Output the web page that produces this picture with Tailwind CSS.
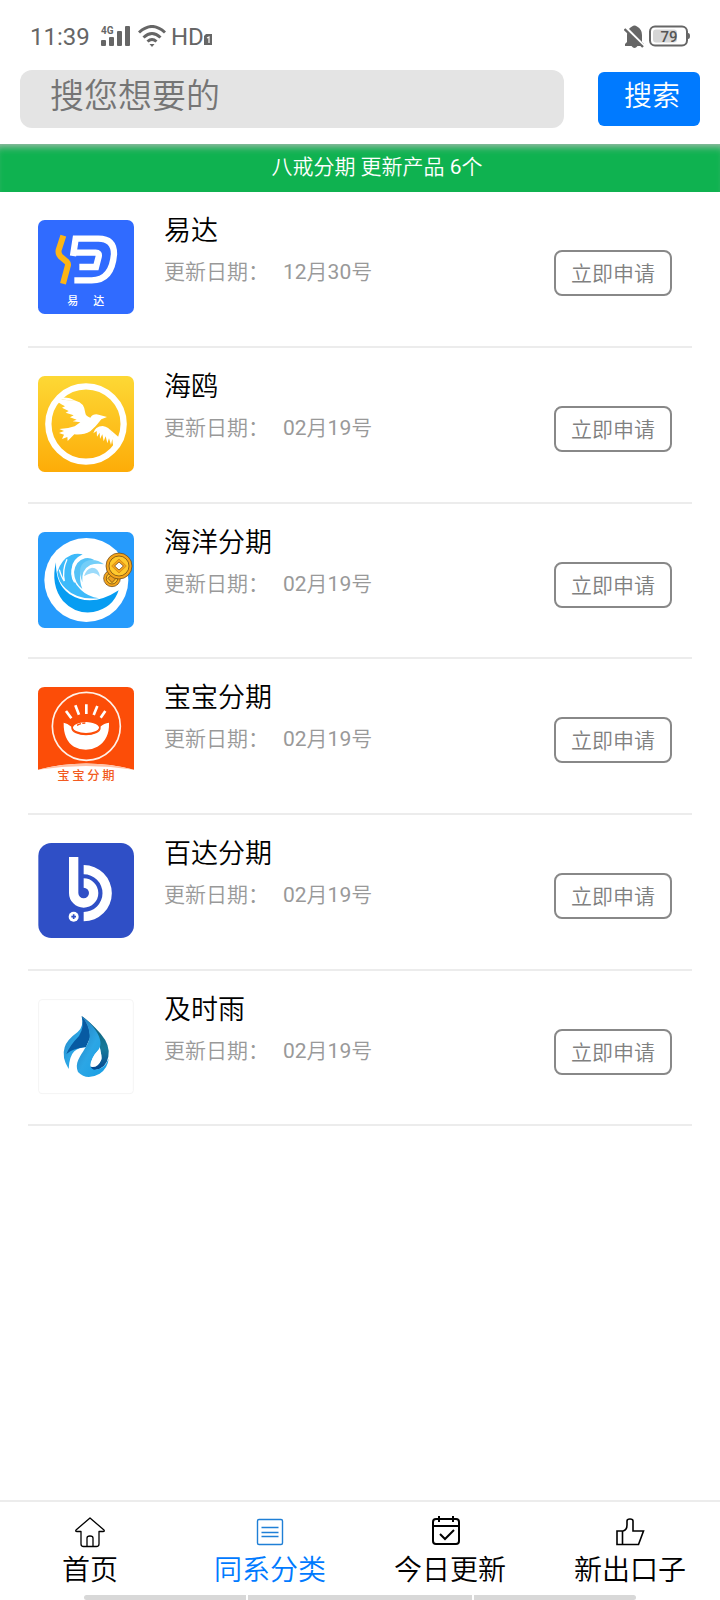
<!DOCTYPE html>
<html lang="zh-CN">
<head>
<meta charset="utf-8">
<meta name="viewport" content="width=device-width, initial-scale=1">
<title>八戒分期</title>
<script src="https://cdn.jsdelivr.net/npm/@tailwindcss/browser@4"></script>
</head>
<body class="flex min-h-screen flex-col bg-white font-[Roboto,'Noto_Sans_CJK_SC',sans-serif] font-[350] text-black">

<header>
  <div class="flex h-[70px] items-center justify-between px-[30px] pt-1 text-[#666]">
    <div class="flex items-center">
      <span class="w-[62px] text-[24px] font-normal">11:39</span>
      <svg class="ml-2 h-6 w-[30px]" viewBox="0 0 30 24" fill="currentColor" aria-hidden="true">
        <rect x="1" y="15" width="5" height="6" rx="1"/><rect x="9" y="12" width="5" height="9" rx="1"/><rect x="17" y="6" width="5" height="15" rx="1"/><rect x="25" y="1" width="5" height="20" rx="1"/>
        <text x="1" y="9" font-size="10" font-weight="700" font-family="Roboto">4G</text>
      </svg>
      <svg class="ml-2 h-6 w-[28px]" viewBox="0 0 28 24" fill="none" stroke="currentColor" stroke-width="3" aria-hidden="true">
        <path d="M1 7.500Q14-4.500 27 7.500M5.500 12.500Q14 4.500 22.500 12.500M9.500 16.500Q14 12.500 18.500 16.500"/><path d="M11.500 19h5L14 22z" fill="currentColor" stroke="none"/>
      </svg>
      <span class="ml-[5px] text-[24px] font-normal">HD</span>
      <svg class="mt-1 h-[11px] w-2" viewBox="0 0 8 11" aria-hidden="true"><path d="M2 0h6v11H0V2z" fill="currentColor"/><path d="M3 4l2-1v6" fill="none" stroke="#fff" stroke-width="1.200"/></svg>
    </div>
    <div class="flex items-center">
      <svg class="h-6 w-5" viewBox="0 0 20 24" aria-hidden="true">
        <path d="M1 19l2-2v-7q0-6 5-8.500q2.500-2 5 0q5 2.500 5 8.500v7l2 2v2h-6.500q-3 4-6 0H1z" fill="currentColor"/>
        <path d="M1 2l19 19" stroke="#fff" stroke-width="3"/><path d="M.5 4l18.500 18" stroke="currentColor" stroke-width="2.400"/>
      </svg>
      <svg class="h-6 w-[46px]" viewBox="0 0 46 24" aria-label="电量 79" role="img">
        <rect x="6" y="1.500" width="37" height="19" rx="5" fill="none" stroke="currentColor" stroke-width="2"/>
        <rect x="9" y="4.500" width="24" height="13" rx="3" fill="#d6d6d6"/><path d="M43 8h1q2 0 2 3t-2 3h-1z" fill="currentColor"/>
        <text x="25" y="16.500" text-anchor="middle" font-size="15" font-weight="500" font-family="Roboto" fill="#555">79</text>
      </svg>
    </div>
  </div>
  <form class="flex items-start gap-[34px] px-5 pb-4">
    <input type="search" aria-label="搜索" placeholder="搜您想要的" class="h-[58px] min-w-0 flex-1 rounded-[12px] bg-[#e4e4e4] pb-[6px] pl-[30px] text-[34px] outline-none placeholder:text-[#757575]">
    <button type="button" class="mt-[2px] h-[54px] w-[102px] rounded-[6px] bg-[#007aff] pb-1 pl-[6px] text-[28px] text-white">搜索</button>
  </form>
</header>

<main class="flex-1">
  <p class="h-12 bg-[#0fb250] pl-[54px] pr-5 text-center text-[21px] leading-[46px] text-white shadow-[inset_0_8px_8px_-6px_#bbb]">八戒分期 更新产品 <span class="font-normal">6</span>个</p>
  <ul class="px-[28px]">
    <li class="flex h-[156px] border-b-2 border-[#ececec] pl-[10px] pr-5 pt-[28px] nth-[3n]:h-[155px]">
      <svg class="h-24 w-24 shrink-0" viewBox="24 30 288 288" aria-hidden="true">
        <rect x="24" y="30" width="288" height="282" rx="20" fill="#306bff"/>
        <path d="M100 77L86 120Q84 131 91 139L111 156Q116 161 113 169L99 221" fill="none" stroke="#fdb515" stroke-width="18"/>
        <path d="M129 138L137 86H205Q252 86 252 132Q246 211 185 211H133M129 128H197Q209 128 206 140L198 171H148" fill="none" stroke="#fff" stroke-width="19"/>
        <text x="112" y="285" font-size="33" font-weight="500" fill="#fff" font-family="Noto Sans CJK SC">易</text><text x="190" y="285" font-size="33" font-weight="500" fill="#fff" font-family="Noto Sans CJK SC">达</text>
      </svg>
      <div class="ml-[30px] min-w-0 flex-1"><h2 class="text-[27px] leading-[22px]">易达</h2><p class="mt-[18px] text-[21px] leading-6 text-[#999]">更新日期：<span class="ml-[14px] font-normal">12</span>月<span class="font-normal">30</span>号</p></div>
      <button type="button" class="mt-[30px] h-[46px] w-[118px] shrink-0 rounded-[8px] border-2 border-[#888] pt-1 text-[21px] text-[#808080]">立即申请</button>
    </li>
    <li class="flex h-[156px] border-b-2 border-[#ececec] pl-[10px] pr-5 pt-[28px] nth-[3n]:h-[155px]">
      <svg class="h-24 w-24 shrink-0" viewBox="24 33 288 288" aria-hidden="true">
        <defs><linearGradient id="gold" x1="0" y1="0" x2="0" y2="1"><stop stop-color="#fdd835"/><stop offset="1" stop-color="#fdac08"/></linearGradient></defs>
        <rect x="24" y="33" width="288" height="288" rx="20" fill="url(#gold)"/>
        <circle cx="168" cy="177" r="113" fill="none" stroke="#fff" stroke-width="19"/>
        <path d="M75 101Q108 105 137 107Q163 112 166 144Q167 153 181 158Q190 145 206 149L231 156L214 163Q197 186 181 199Q160 211 133 208L113 228L112 216L96 222L102 209L87 204L102 198L88 192Q112 192 134 184L151 172L128 169L140 164L120 157L131 151L107 143L116 138L96 128L105 124Q84 113 75 101Z" fill="#fff"/>
        <path d="M190 205Q195 184 218 183Q255 187 257 256Q248 247 247 222L243 240L237 220L232 235L227 214L221 229L217 208L210 222L209 203L201 215L200 198Z" fill="#fff"/>
        <path d="M75 101Q112 92 137 108L103 104ZM238 192Q254 209 253 251L270 220Z" fill="#fff"/>
      </svg>
      <div class="ml-[30px] min-w-0 flex-1"><h2 class="text-[27px] leading-[22px]">海鸥</h2><p class="mt-[18px] text-[21px] leading-6 text-[#999]">更新日期：<span class="ml-[14px] font-normal">02</span>月<span class="font-normal">19</span>号</p></div>
      <button type="button" class="mt-[30px] h-[46px] w-[118px] shrink-0 rounded-[8px] border-2 border-[#888] pt-1 text-[21px] text-[#808080]">立即申请</button>
    </li>
    <li class="flex h-[156px] border-b-2 border-[#ececec] pl-[10px] pr-5 pt-[28px] nth-[3n]:h-[155px]">
      <svg class="h-24 w-24 shrink-0" viewBox="24 30 288 288" aria-hidden="true">
        <rect x="24" y="30" width="288" height="288" rx="20" fill="#269bfc"/><circle cx="169" cy="174" r="126" fill="#fff"/>
        <path d="M78 121Q76 186 118 216Q184 259 266 205Q249 258 190 270Q137 278 99 237Q61 190 78 121Z" fill="#079df2"/>
        <path d="M82 150Q94 111 124 99Q139 93 158 97Q126 112 125 140Q124 177 153 204Q174 224 207 229Q141 235 106 199Q84 177 82 150Z" fill="#3dbafa"/>
        <path d="M132 150Q137 116 165 109Q178 106 192 113Q156 125 152 151Q147 177 157 201Q133 182 132 150Z" fill="#55c2f7"/>
        <path d="M176 115Q201 111 222 127Q200 122 181 129Q153 143 157 181Q137 126 176 115Z" fill="#73cef8"/>
        <path d="M162 163Q168 141 186 137Q206 137 210 164Q197 150 184 154Q171 157 162 163Z" fill="#9bdafa"/>
        <path d="M88 143Q94 165 103 177Q96 145 111 112M130 132Q119 157 134 181" stroke="#fff" stroke-width="4" fill="none"/>
        <g stroke="#5b3b14" stroke-width="2"><circle cx="246" cy="169" r="25" fill="#f5a51a"/><circle cx="246" cy="169" r="17" fill="#ffc530"/><path d="M246 156l12 13-12 13-12-13z" fill="#eea020"/>
        <circle cx="267" cy="132" r="39" fill="#f5a51a"/><circle cx="267" cy="132" r="30" fill="#ffc92d"/><path d="M267 111l22 21-22 21-22-21z" fill="#f5a51a" stroke="#c77b15"/><path d="M267 120l13 12-13 12-13-12z" fill="#fff"/></g>
      </svg>
      <div class="ml-[30px] min-w-0 flex-1"><h2 class="text-[27px] leading-[22px]">海洋分期</h2><p class="mt-[18px] text-[21px] leading-6 text-[#999]">更新日期：<span class="ml-[14px] font-normal">02</span>月<span class="font-normal">19</span>号</p></div>
      <button type="button" class="mt-[30px] h-[46px] w-[118px] shrink-0 rounded-[8px] border-2 border-[#888] pt-1 text-[21px] text-[#808080]">立即申请</button>
    </li>
    <li class="flex h-[156px] border-b-2 border-[#ececec] pl-[10px] pr-5 pt-[28px] nth-[3n]:h-[155px]">
      <svg class="h-24 w-24 shrink-0" viewBox="24 30 288 288" aria-hidden="true">
        <path d="M24 278V50q0-20 20-20h248q20 0 20 20v228q-144-37-288 0z" fill="#fc4d08"/><path d="M24 278q144-37 288 0-144-22-288 0z" fill="#ffc2a6"/>
        <circle cx="169" cy="148" r="102" fill="none" stroke="#fff1e8" stroke-width="5"/>
        <path d="M101 137Q112 139 124 149C130 181 207 182 211 149Q222 138 237 137Q239 187 202 209Q168 228 132 209Q100 189 101 137Z" fill="#fff"/>
        <ellipse cx="168" cy="151" rx="39" ry="17" fill="#fff"/><ellipse cx="168" cy="153" rx="42" ry="20" fill="none" stroke="#fc4d08" stroke-width="4"/>
        <path d="M141 145q12-7 25-7" stroke="#fc4d08" stroke-width="4" stroke-dasharray="13 4" fill="none"/>
        <path d="M108 102l16 22M136 85l11 28M169 82v29M202 87l-11 27M226 102l-14 20" stroke="#fff" stroke-width="8"/>
        <text x="82" y="310" font-size="37" font-weight="500" fill="#f25a20" font-family="Noto Sans CJK SC">宝</text><text x="127" y="310" font-size="37" font-weight="500" fill="#f25a20" font-family="Noto Sans CJK SC">宝</text><text x="172" y="310" font-size="37" font-weight="500" fill="#f25a20" font-family="Noto Sans CJK SC">分</text><text x="217" y="310" font-size="37" font-weight="500" fill="#f25a20" font-family="Noto Sans CJK SC">期</text>
      </svg>
      <div class="ml-[30px] min-w-0 flex-1"><h2 class="text-[27px] leading-[22px]">宝宝分期</h2><p class="mt-[18px] text-[21px] leading-6 text-[#999]">更新日期：<span class="ml-[14px] font-normal">02</span>月<span class="font-normal">19</span>号</p></div>
      <button type="button" class="mt-[30px] h-[46px] w-[118px] shrink-0 rounded-[8px] border-2 border-[#888] pt-1 text-[21px] text-[#808080]">立即申请</button>
    </li>
    <li class="flex h-[156px] border-b-2 border-[#ececec] pl-[10px] pr-5 pt-[28px] nth-[3n]:h-[155px]">
      <svg class="h-24 w-24 shrink-0" viewBox="24 30 288 288" aria-hidden="true">
        <rect x="25" y="30" width="287" height="285" rx="39" fill="#2f4fc6"/>
        <path d="M117 72h28v108a16 16 0 1 0 16-16v-28a44 44 0 1 1-44 44z" fill="#fff"/>
        <path d="M161 96a84 84 0 0 1 0 169v-28a56 56 0 0 0 0-113z" fill="#fff"/>
        <circle cx="131" cy="251" r="15" fill="#fff"/><path d="M131 244v14M124 251h14" stroke="#2f4fc6" stroke-width="5"/>
      </svg>
      <div class="ml-[30px] min-w-0 flex-1"><h2 class="text-[27px] leading-[22px]">百达分期</h2><p class="mt-[18px] text-[21px] leading-6 text-[#999]">更新日期：<span class="ml-[14px] font-normal">02</span>月<span class="font-normal">19</span>号</p></div>
      <button type="button" class="mt-[30px] h-[46px] w-[118px] shrink-0 rounded-[8px] border-2 border-[#888] pt-1 text-[21px] text-[#808080]">立即申请</button>
    </li>
    <li class="flex h-[156px] border-b-2 border-[#ececec] pl-[10px] pr-5 pt-[28px] nth-[3n]:h-[155px]">
      <svg class="h-24 w-24 shrink-0" viewBox="24 40 288 288" aria-hidden="true">
        <defs><linearGradient id="drop" x1="0" y1="0" x2="1" y2="1"><stop stop-color="#2176b5"/><stop offset=".5" stop-color="#2ca6e5"/><stop offset="1" stop-color="#149ee5"/></linearGradient><linearGradient id="edge" x1="0" y1="0" x2="0" y2="1"><stop stop-color="#0b5870"/><stop offset=".6" stop-color="#187b9b"/><stop offset="1" stop-color="#034590"/></linearGradient></defs>
        <rect x="26" y="42" width="284" height="282" rx="10" fill="#fff" stroke="#f4f4f4" stroke-width="3"/>
        <path d="M155 91Q180 108 212 144Q242 179 235 213Q229 248 193 254Q180 253 181 243Q207 242 214 220Q217 168 155 91Z" fill="url(#edge)"/>
        <path d="M155 91Q163 122 143 139Q110 163 104 185Q94 215 116 250Q118 211 133 197Q147 185 168 184Q180 142 155 91Z" fill="url(#drop)"/>
        <path d="M155 91Q164 125 147 151Q119 180 109 205Q127 188 168 184L181 155Q181 119 155 91Z" fill="#075aa2"/>
        <path d="M155 91Q178 117 179 151Q178 168 165 188C150 214 133 232 144 259Q170 286 209 264Q233 248 236 219Q223 252 192 252Q177 246 183 228Q190 208 207 190C224 164 193 119 155 91Z" fill="url(#drop)"/>
        <path d="M207 192Q217 209 214 222Q204 247 184 244Q178 218 207 192Z" fill="#fff"/>
      </svg>
      <div class="ml-[30px] min-w-0 flex-1"><h2 class="text-[27px] leading-[22px]">及时雨</h2><p class="mt-[18px] text-[21px] leading-6 text-[#999]">更新日期：<span class="ml-[14px] font-normal">02</span>月<span class="font-normal">19</span>号</p></div>
      <button type="button" class="mt-[30px] h-[46px] w-[118px] shrink-0 rounded-[8px] border-2 border-[#888] pt-1 text-[21px] text-[#808080]">立即申请</button>
    </li>
  </ul>
</main>

<footer>
  <nav class="grid h-[95px] grid-cols-4 border-t-2 border-[#ececec] pt-[14px] text-[28px] leading-9">
    <a href="#" class="flex flex-col items-center gap-[5px]">
      <svg class="h-8 w-8" viewBox="0 0 32 32" fill="none" stroke="currentColor" stroke-width="1.300" stroke-linejoin="round" aria-hidden="true"><path d="M16 2L2 14q-1 1.500 1 1.500h4V28q0 2.500 2.500 2.500h13q2.500 0 2.500-2.500V15.500h4q2 0 1-1.500zM13 30v-8q0-2 3-2t3 2v8"/></svg>首页</a>
    <a href="#" class="flex flex-col items-center gap-[5px] text-[#007aff]" aria-current="page">
      <svg class="h-8 w-8" viewBox="0 0 32 32" fill="none" stroke="#1f7fd6" stroke-width="1.400" aria-hidden="true"><rect x="3.500" y="3.500" width="25" height="25" rx="1.500"/><path d="M7.500 11.500h17M7.500 16.500h17M7.500 20.500h17"/></svg>同系分类</a>
    <a href="#" class="flex flex-col items-center gap-[5px]">
      <svg class="mr-2 h-8 w-8" viewBox="0 0 32 32" fill="none" stroke="currentColor" stroke-width="2" aria-hidden="true"><rect x="3" y="3" width="26" height="25" rx="3"/><path d="M3 10h26M9 0v6M23 0v6M10 18l5 5 9-9"/></svg>今日更新</a>
    <a href="#" class="flex flex-col items-center gap-[5px]">
      <svg class="h-8 w-8" viewBox="0 0 32 32" fill="none" stroke="currentColor" stroke-width="1.600" aria-hidden="true"><path d="M3 15h6q4-1 4-6V5q0-2 3-2t3 2v10h10.500L24.500 28.500H3zM8.500 15v13.500"/></svg>新出口子</a>
  </nav>
  <div class="mx-[84px] grid h-[5px] grid-cols-[163fr_225fr_163fr] gap-[2px]" aria-hidden="true"><i class="rounded-l bg-[#d8d8d8]"></i><i class="bg-[#d8d8d8]"></i><i class="rounded-r bg-[#d8d8d8]"></i></div>
</footer>
</body>
</html>
